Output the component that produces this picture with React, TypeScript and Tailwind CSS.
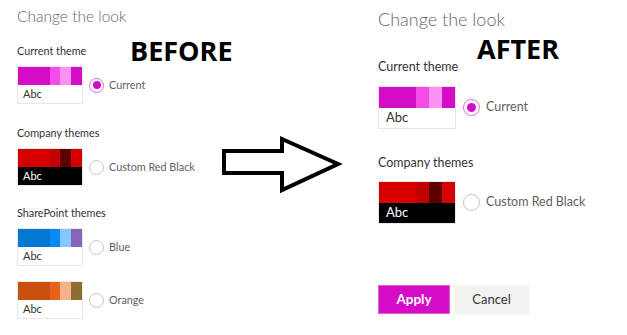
import React from "react";

type Swatch = { colors: string[]; dark?: boolean };

const FONT = { fontFamily: "Lato, 'Open Sans', sans-serif" };

function ThemeSwatch({ swatch, big }: { swatch: Swatch; big?: boolean }) {
  const widths = big ? ["w-[37px]", "w-[13px]", "w-[13px]", "w-[13px]"] : ["w-[32px]", "w-[11px]", "w-[11px]", "w-[11px]"];
  return (
    <div className={`border border-[#e8e8e8] flex flex-col ${big ? "w-[78px]" : "w-[66px]"}`}>
      <div className={`flex ${big ? "h-[21px]" : "h-[18px]"}`}>
        {swatch.colors.map((c, i) => (
          <div key={i} className={`${widths[i]} h-full`} style={{ background: c }} />
        ))}
      </div>
      <div
        className={`flex items-center ${big ? "h-[20px] pl-[7px] text-[13px]" : "h-[18px] pl-[5px] text-[11px]"} ${
          swatch.dark ? "bg-black text-white" : "bg-white text-[#333]"
        }`}
      >
        Abc
      </div>
    </div>
  );
}

function Radio({ checked, big }: { checked?: boolean; big?: boolean }) {
  return (
    <div
      className={`rounded-full flex items-center justify-center bg-white ${big ? "w-[17px] h-[17px]" : "w-[15px] h-[15px]"} ${
        checked ? "border border-[#e467dc]" : "border border-[#c4c4c4]"
      }`}
    >
      {checked && <div className={`rounded-full bg-[#d40cc6] ${big ? "w-[9px] h-[9px]" : "w-[8px] h-[8px]"}`} />}
    </div>
  );
}

function ThemeRow({ swatch, label, checked, big }: { swatch: Swatch; label: string; checked?: boolean; big?: boolean }) {
  return (
    <div className="flex items-center">
      <ThemeSwatch swatch={swatch} big={big} />
      <div className={big ? "ml-[7px]" : "ml-[6px]"}>
        <Radio checked={checked} big={big} />
      </div>
      <span className={`text-[#606060] ${big ? "ml-[6px] text-[12.5px]" : "ml-[5px] text-[10.8px]"}`}>{label}</span>
    </div>
  );
}

const current: Swatch = { colors: ["#d40cc6", "#f54ce9", "#f992f0", "#d40cc6"] };
const redBlack: Swatch = { colors: ["#d70000", "#c20000", "#5c0000", "#d70000"], dark: true };
const blue: Swatch = { colors: ["#0078d4", "#0a8af2", "#86c8fd", "#8764b8"] };
const orange: Swatch = { colors: ["#ca5010", "#e8611a", "#f7b28c", "#8e6d32"] };

export default function App() {
  return (
    <div className="relative flex w-[627px] h-[335px] bg-white overflow-hidden" style={FONT}>
      {/* Before */}
      <div className="w-[210px] pl-[17px] flex flex-col">
        <div className="mt-[6px] text-[15.5px] leading-[20px] font-light text-[#666]">Change the look</div>
        <div className="mt-[18px] text-[10.8px] leading-[14px] text-[#333]">Current theme</div>
        <div className="mt-[8px]">
          <ThemeRow swatch={current} label="Current" checked />
        </div>
        <div className="mt-[22px] text-[10.8px] leading-[14px] text-[#333]">Company themes</div>
        <div className="mt-[8px]">
          <ThemeRow swatch={redBlack} label="Custom Red Black" />
        </div>
        <div className="mt-[20px] text-[10.8px] leading-[14px] text-[#333]">SharePoint themes</div>
        <div className="mt-[8px]">
          <ThemeRow swatch={blue} label="Blue" />
        </div>
        <div className="mt-[15px]">
          <ThemeRow swatch={orange} label="Orange" />
        </div>
      </div>

      {/* Arrow */}
      <div className="w-[168px]">
        <svg width="124" height="60" viewBox="0 0 124 60" className="ml-[10px] mt-[135px]">
          <polygon
            points="4,16 62,16 62,4 118,29 62,55 62,38 4,38"
            fill="white"
            stroke="black"
            strokeWidth="4"
            strokeLinejoin="miter"
          />
        </svg>
      </div>

      {/* After */}
      <div className="flex flex-col">
        <div className="mt-[7px] text-[18px] leading-[24px] font-light text-[#666]">Change the look</div>
        <div className="mt-[28px] text-[12.5px] leading-[16px] text-[#333]">Current theme</div>
        <div className="mt-[11px]">
          <ThemeRow swatch={current} label="Current" checked big />
        </div>
        <div className="mt-[26px] text-[12.5px] leading-[16px] text-[#333]">Company themes</div>
        <div className="mt-[10px]">
          <ThemeRow swatch={redBlack} label="Custom Red Black" big />
        </div>
        <div className="mt-[61px] flex gap-[4px]">
          <button className="w-[72px] h-[29px] bg-[#d40cc6] border border-[#e060d8] text-white font-bold text-[13.5px]">
            Apply
          </button>
          <button className="w-[75px] h-[29px] bg-[#f3f2f1] text-[#333] text-[13px]">Cancel</button>
        </div>
      </div>

      {/* Labels */}
      <div
        className="absolute left-[130px] top-[37px] text-[27px] leading-[27px] font-bold text-black"
        style={{ fontFamily: "'Open Sans', sans-serif" }}
      >
        BEFORE
      </div>
      <div
        className="absolute left-[477px] top-[35px] text-[27px] leading-[27px] font-bold text-black"
        style={{ fontFamily: "'Open Sans', sans-serif" }}
      >
        AFTER
      </div>
    </div>
  );
}
